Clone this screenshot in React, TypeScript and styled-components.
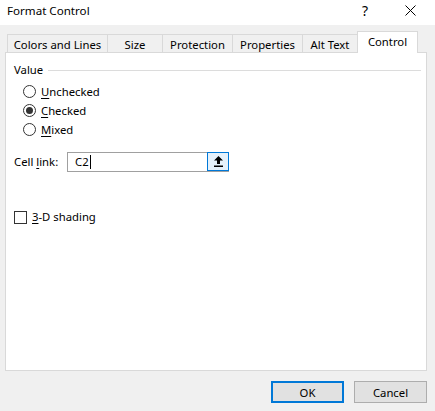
import React from 'react'
import styled, { createGlobalStyle, css } from 'styled-components'

const GlobalStyle = createGlobalStyle`
    html, body {
        margin: 0;
        padding: 0;
        background: #f0f0f0;
    }
    body {
        font-family: "Noto Sans", "Segoe UI", sans-serif;
        font-size: 11.3px;
        color: #000;
    }
`

const Window = styled.div`
    width: 435px;
    height: 411px;
    display: flex;
    flex-direction: column;
    background: #f0f0f0;
    overflow: hidden;
`

const TitleBar = styled.div`
    height: 26px;
    background: #fff;
    display: flex;
    align-items: center;
    padding-left: 7px;
    padding-right: 19px;
    box-sizing: border-box;
`

const Title = styled.div`
    flex: 1;
    font-size: 11.6px;
    line-height: 16px;
    margin-top: -3px;
`

const TitleButton = styled.div`
    width: 12px;
    display: flex;
    justify-content: center;
    font-size: 14px;
    line-height: 16px;
    margin-top: -4px;
    & + & {
        margin-left: 33px;
    }
`

const Body = styled.div`
    flex: 1;
    display: flex;
    flex-direction: column;
    padding: 7px 8px 8px 5px;
`

const TabStrip = styled.div`
    display: flex;
    align-items: flex-end;
    height: 20px;
    padding-left: 2px;
    position: relative;
    z-index: 1;
`

const Tab = styled.div<{ $w: number; $active?: boolean }>`
    width: ${p => p.$w}px;
    height: 18px;
    box-sizing: border-box;
    border: 1px solid #d9d9d9;
    border-bottom: none;
    background: #f0f0f0;
    margin-right: -1px;
    padding-top: 2px;
    display: flex;
    justify-content: center;
    align-items: center;
    line-height: 16px;
    ${p => p.$active && css`
        height: 22px;
        background: #fff;
        margin-bottom: -1px;
        padding-top: 0;
        padding-bottom: 2px;
    `}
`

const Panel = styled.div`
    height: 319px;
    box-sizing: border-box;
    border: 1px solid #d9d9d9;
    background: #fff;
    padding: 9px 5px 0 8px;
`

const GroupHeader = styled.div`
    display: flex;
    align-items: center;
    gap: 5px;
    line-height: 16px;
    &::after {
        content: '';
        flex: 1;
        height: 1px;
        background: #dcdcdc;
        margin-top: 1px;
    }
`

const RadioList = styled.div`
    display: flex;
    flex-direction: column;
    padding-left: 9px;
    margin-top: 4px;
`

const RadioRow = styled.div`
    height: 19px;
    display: flex;
    align-items: center;
    gap: 5px;
`

const RadioCircle = styled.span<{ $checked?: boolean }>`
    width: 13px;
    height: 13px;
    box-sizing: border-box;
    border: 1px solid #333;
    border-radius: 50%;
    background: #fff;
    display: flex;
    align-items: center;
    justify-content: center;
    &::after {
        content: '';
        width: 7px;
        height: 7px;
        border-radius: 50%;
        background: ${p => (p.$checked ? '#333' : 'transparent')};
    }
`

const Key = styled.span`
    text-decoration: underline;
    text-underline-offset: 2px;
`

const LinkRow = styled.div`
    display: flex;
    align-items: center;
    margin-top: 13px;
`

const LinkLabel = styled.div`
    width: 53px;
    line-height: 16px;
`

const InputFrame = styled.div`
    width: 162px;
    height: 20px;
    box-sizing: border-box;
    border: 1px solid #a0a0a0;
    display: flex;
    align-items: center;
`

const InputText = styled.div`
    flex: 1;
    padding-left: 7px;
    line-height: 16px;
    display: flex;
    align-items: center;
`

const Caret = styled.span`
    width: 1px;
    height: 14px;
    background: #000;
    margin-left: 1px;
`

const CollapseButton = styled.div`
    width: 22px;
    height: 19px;
    box-sizing: border-box;
    margin: -1px -1px 0 0;
    border: 1px solid #0078d7;
    background: #e5f1fb;
    display: flex;
    align-items: center;
    justify-content: center;
`

const CheckRow = styled.div`
    display: flex;
    align-items: center;
    gap: 5px;
    margin-top: 37px;
    line-height: 16px;
`

const CheckBox = styled.span`
    width: 13px;
    height: 13px;
    box-sizing: border-box;
    border: 1px solid #333;
    background: #fff;
`

const Footer = styled.div`
    display: flex;
    justify-content: flex-end;
    gap: 10px;
    margin-top: 10px;
`

const Button = styled.div<{ $default?: boolean }>`
    width: 73px;
    height: 22px;
    box-sizing: border-box;
    background: #e1e1e1;
    border: 1px solid #adadad;
    display: flex;
    align-items: center;
    justify-content: center;
    ${p => p.$default && css`
        border: 2px solid #0078d7;
    `}
`

const radios = [
    { key: 'U', rest: 'nchecked', checked: false },
    { key: 'C', rest: 'hecked', checked: true },
    { key: 'M', rest: 'ixed', checked: false },
]

const tabs = [
    { label: 'Colors and Lines', w: 101 },
    { label: 'Size', w: 56 },
    { label: 'Protection', w: 71 },
    { label: 'Properties', w: 71 },
    { label: 'Alt Text', w: 56 },
    { label: 'Control', w: 61, active: true },
]

const App = () => {
    return (
        <>
            <GlobalStyle />
            <Window>
                <TitleBar>
                    <Title>Format Control</Title>
                    <TitleButton>?</TitleButton>
                    <TitleButton>
                        <svg width="11" height="11" viewBox="0 0 11 11">
                            <path d="M0.5 0.5 L10.5 10.5 M10.5 0.5 L0.5 10.5" stroke="#000" strokeWidth="1" />
                        </svg>
                    </TitleButton>
                </TitleBar>
                <Body>
                    <TabStrip>
                        {tabs.map(t => (
                            <Tab key={t.label} $w={t.w} $active={t.active}>{t.label}</Tab>
                        ))}
                    </TabStrip>
                    <Panel>
                        <GroupHeader>Value</GroupHeader>
                        <RadioList>
                            {radios.map(r => (
                                <RadioRow key={r.key}>
                                    <RadioCircle $checked={r.checked} />
                                    <span><Key>{r.key}</Key>{r.rest}</span>
                                </RadioRow>
                            ))}
                        </RadioList>
                        <LinkRow>
                            <LinkLabel>Cell <Key>l</Key>ink:</LinkLabel>
                            <InputFrame>
                                <InputText>C2<Caret /></InputText>
                                <CollapseButton>
                                    <svg width="9" height="11" viewBox="0 0 9 11">
                                        <path d="M4.5 0 L9 4.5 L6 4.5 L6 8 L3 8 L3 4.5 L0 4.5 Z" fill="#000" />
                                        <rect x="0" y="9.5" width="9" height="1.5" fill="#000" />
                                    </svg>
                                </CollapseButton>
                            </InputFrame>
                        </LinkRow>
                        <CheckRow>
                            <CheckBox />
                            <span><Key>3</Key>-D shading</span>
                        </CheckRow>
                    </Panel>
                    <Footer>
                        <Button $default>OK</Button>
                        <Button>Cancel</Button>
                    </Footer>
                </Body>
            </Window>
        </>
    )
}

export default App
